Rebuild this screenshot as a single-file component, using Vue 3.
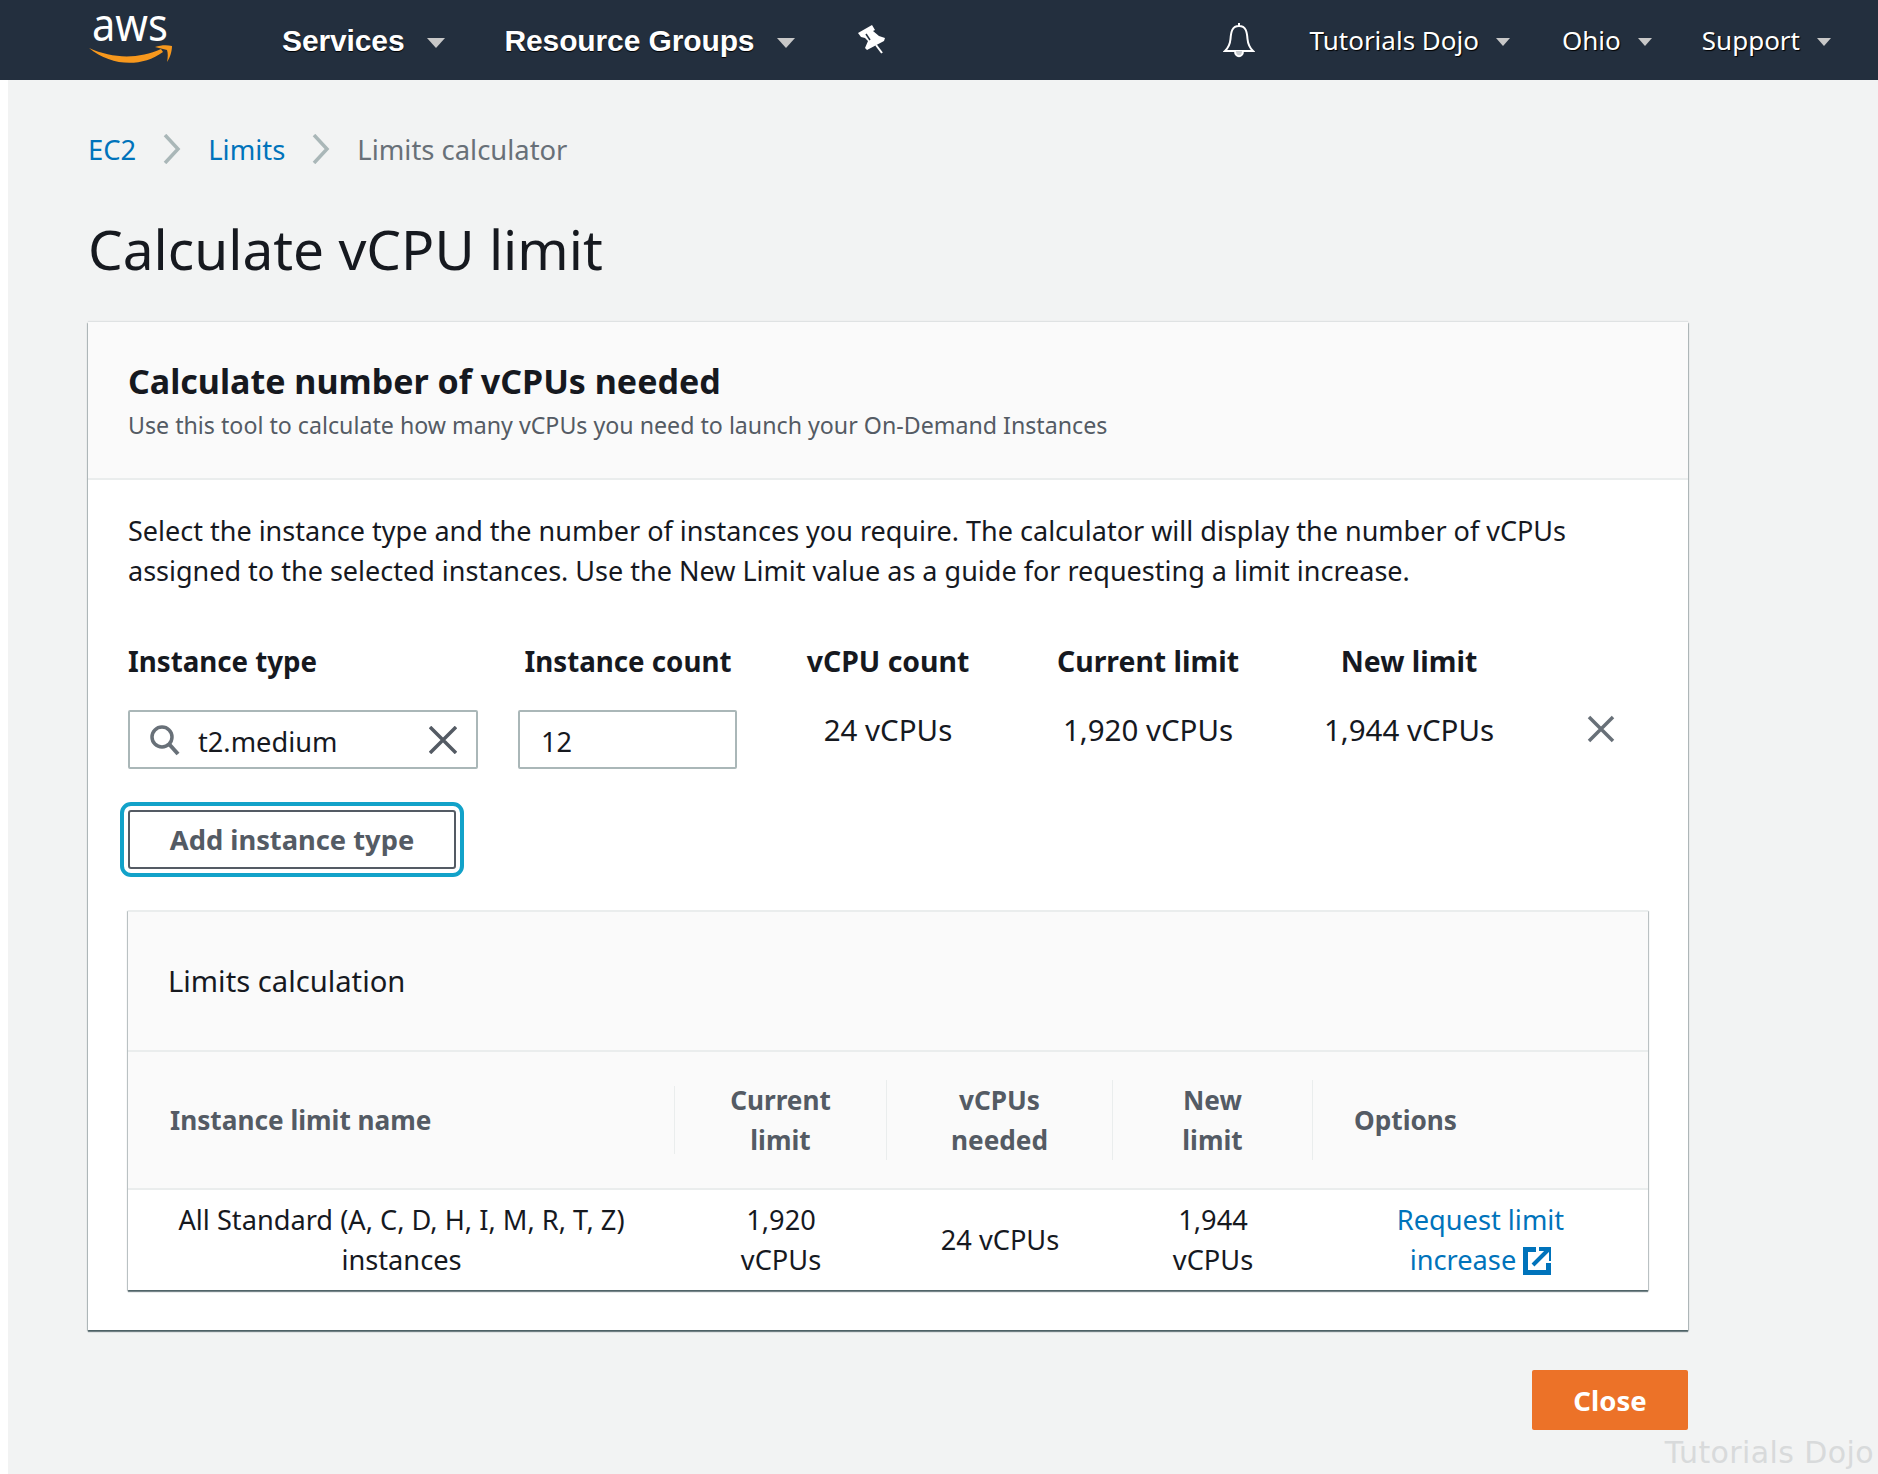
<script setup>
const cols = [
  { label: 'vCPU count', value: '24 vCPUs' },
  { label: 'Current limit', value: '1,920 vCPUs' },
  { label: 'New limit', value: '1,944 vCPUs' }
]
const headers = [
  { text: 'Instance limit name', cls: 'left' },
  { text: 'Current limit', cls: '' },
  { text: 'vCPUs needed', cls: '' },
  { text: 'New limit', cls: '' },
  { text: 'Options', cls: 'left' }
]
</script>

<template>
  <div class="page">
    <header class="topbar">
      <svg class="logo" width="84" height="56" viewBox="0 0 84 56">
        <text x="3" y="29" class="logotext" textLength="76" lengthAdjust="spacingAndGlyphs">aws</text>
        <path d="M0 36 C 24 47, 50 47, 72 37 L74 40 C 52 56, 22 54, 0 36 Z" fill="#f7981d"/>
        <path d="M66 35 C 72 33 78 33 83 34 C 83 39 81 46 78 50 C 79 45 79 41 78 38 C 74 37 70 36 66 35 Z" fill="#f7981d"/>
      </svg>
      <div class="nav nav-bold first-bold">Services<i class="caret big"></i></div>
      <div class="nav nav-bold">Resource Groups<i class="caret big"></i></div>
      <svg class="pin" width="30" height="30" viewBox="16 11 30 30">
        <path d="M17 19 L31 11 L34 16 L32 17 L38 22 L44 24 L43 27 L26 36 L24 34 L27 27 L24 24 L20 23 Z" fill="#fff"/>
        <path d="M35 31 L41 39" stroke="#fff" stroke-width="2"/>
        <path d="M25 20 L29 26" stroke="#232f3e" stroke-width="1.500"/>
      </svg>
      <div class="spacer"></div>
      <svg class="bell" width="32" height="36" viewBox="0 0 32 36">
        <path d="M16 1 V4 M16 4 C9 4 8 10 7.500 17 C7 23 5 26 2 29 L30 29 C27 26 25 23 24.500 17 C24 10 23 4 16 4 Z" fill="none" stroke="#fff" stroke-width="2"/>
        <path d="M12 29 C12 36 20 36 20 29" fill="#c8ccd0" stroke="#fff" stroke-width="2"/>
      </svg>
      <div class="nav nav-light first">Tutorials Dojo<i class="caret"></i></div>
      <div class="nav nav-light">Ohio<i class="caret"></i></div>
      <div class="nav nav-light last">Support<i class="caret"></i></div>
    </header>

    <main class="content">
      <nav class="crumbs">
        <a>EC2</a>
        <svg width="18" height="30" viewBox="0 0 18 30"><path d="M2 1 L15 15 L2 29" fill="none" stroke="#aab7b8" stroke-width="3.500"/></svg>
        <a>Limits</a>
        <svg width="18" height="30" viewBox="0 0 18 30"><path d="M2 1 L15 15 L2 29" fill="none" stroke="#aab7b8" stroke-width="3.500"/></svg>
        <span>Limits calculator</span>
      </nav>
      <h1>Calculate vCPU limit</h1>

      <section class="card">
        <div class="card-head">
          <h2>Calculate number of vCPUs needed</h2>
          <p>Use this tool to calculate how many vCPUs you need to launch your On-Demand Instances</p>
        </div>
        <div class="card-body">
          <p class="intro">Select the instance type and the number of instances you require. The calculator will display the number of vCPUs assigned to the selected instances. Use the New Limit value as a guide for requesting a limit increase.</p>

          <div class="form-grid">
            <label class="lab">Instance type</label>
            <label class="lab ctr">Instance count</label>
            <label v-for="c in cols" :key="c.label" class="lab ctr wide">{{ c.label }}</label>
            <span></span>

            <div class="box search">
              <svg width="32" height="32" viewBox="0 0 32 32"><circle cx="13" cy="13" r="10" fill="none" stroke="#687078" stroke-width="3.500"/><path d="M20 20 L29 30" stroke="#687078" stroke-width="4"/></svg>
              <span class="grow">t2.medium</span>
              <svg width="28" height="28" viewBox="0 0 28 28"><path d="M1 1 L27 27 M27 1 L1 27" stroke="#545b64" stroke-width="3.500"/></svg>
            </div>
            <div class="box count"><span>12</span></div>
            <div v-for="c in cols" :key="c.value" class="val">{{ c.value }}</div>
            <svg class="rowx" width="30" height="30" viewBox="0 0 30 30"><path d="M3 3 L27 27 M27 3 L3 27" stroke="#687078" stroke-width="3.500"/></svg>
          </div>

          <button class="add">Add instance type</button>

          <div class="limits">
            <div class="limits-title">Limits calculation</div>
            <table>
              <colgroup>
                <col class="c1" /><col class="c2" /><col class="c3" /><col class="c4" /><col />
              </colgroup>
              <thead>
                <tr>
                  <th v-for="h in headers" :key="h.text" :class="h.cls"><div class="th-in">{{ h.text }}</div></th>
                </tr>
              </thead>
              <tbody>
                <tr>
                  <td>All Standard (A, C, D, H, I, M, R, T, Z)<br />instances</td>
                  <td>1,920<br />vCPUs</td>
                  <td>24 vCPUs</td>
                  <td>1,944<br />vCPUs</td>
                  <td class="link">Request limit<br />increase
                    <svg class="ext" width="28" height="28" viewBox="0 0 28 28"><path d="M13 2.500 H2.500 V25.500 H25.500 V16" fill="none" stroke="#0073bb" stroke-width="5"/><path d="M10 18 L25 3 M16 2 H28 V14" fill="none" stroke="#0073bb" stroke-width="4"/></svg>
                  </td>
                </tr>
              </tbody>
            </table>
          </div>
        </div>
      </section>

      <div class="actions"><button class="close">Close</button></div>
    </main>
    <div class="mark">Tutorials Dojo</div>
  </div>
</template>

<style>
html, body { margin: 0; background: #f2f3f3; }
</style>

<style scoped>
.page {
  position: relative;
  width: 1878px;
  height: 1474px;
  overflow: hidden;
  background: #f2f3f3;
  font-family: "Noto Sans", "Open Sans", sans-serif;
  color: #16191f;
}
.topbar {
  height: 80px;
  background: #232f3e;
  display: flex;
  align-items: center;
  padding-left: 89px;
  padding-right: 47px;
  box-sizing: border-box;
}
.logo { margin-right: 109px; flex: none; }
.logotext { font-family: "Noto Sans", sans-serif; font-size: 46px; fill: #fff; }
.nav { color: #fff; display: flex; align-items: center; white-space: nowrap; }
.nav-bold {
  font-family: "Liberation Sans", sans-serif;
  font-size: 30px;
  font-weight: 700;
  letter-spacing: -0.12px;
  margin-right: 58px;
  margin-top: 2px;
  text-shadow: 0 1px 1px #000;
}
.first-bold { margin-right: 59px; }
.nav-light {
  font-size: 26px;
  margin-left: 52px;
  text-shadow: 1px 1px 1px #000;
}
.nav-light.first { margin-left: 55px; }
.nav-light.last { margin-left: 50px; }
.caret {
  display: inline-block;
  width: 0;
  height: 0;
  border-left: 7px solid transparent;
  border-right: 7px solid transparent;
  border-top: 8px solid #c8c8c8;
  margin-left: 17px;
  margin-top: 3px;
}
.caret.big {
  border-left-width: 9px;
  border-right-width: 9px;
  border-top-width: 10px;
  margin-left: 23px;
}
.pin { margin-left: 4px; flex: none; }
.spacer { flex: 1; }
.bell { flex: none; }

.content { padding: 49px 190px 0 88px; position: relative; }
.content::before {
  content: "";
  position: absolute;
  left: 0;
  top: 0;
  width: 8px;
  height: 1394px;
  background: #fff;
}
.crumbs {
  display: flex;
  align-items: center;
  height: 40px;
  gap: 27px;
  font-size: 27.400px;
  color: #687078;
}
.crumbs a { color: #0073bb; }
h1 {
  margin: 44px 0 0;
  font-size: 55px;
  line-height: 72px;
  font-weight: 400;
  color: #16191f;
}
.card {
  margin-top: 37px;
  background: #fff;
  height: 1008px;
  box-shadow: 0 2px 1px 0 rgba(0, 28, 36, 0.5), 1px 1px 1px 0 rgba(0, 28, 36, 0.2), -1px 1px 1px 0 rgba(0, 28, 36, 0.2), 0 -1px 1px 0 rgba(0, 28, 36, 0.08);
}
.card-head {
  height: 158px;
  box-sizing: border-box;
  background: #fafafa;
  border-bottom: 2px solid #eaeded;
  padding: 37px 40px 0;
}
h2 { margin: 0; font-size: 34px; line-height: 44px; font-weight: 700; }
.card-head p { margin: 5px 0 0; font-size: 23.200px; line-height: 34px; color: #545b64; }
.card-body { padding: 31px 40px 0; }
.intro { margin: 0; font-size: 27px; line-height: 40px; width: 1500px; }
.form-grid {
  display: grid;
  grid-template-columns: 350px 259px 302px 218px 304px 60px;
  grid-template-rows: 69px 59px;
  margin-top: 50px;
}
.form-grid > :nth-child(2) { margin-left: 41px; }
.lab { font-size: 27.700px; font-weight: 700; line-height: 40px; }
.lab.ctr { text-align: center; }
.lab.wide { font-size: 28.400px; }
.box {
  box-sizing: border-box;
  height: 59px;
  border: 2px solid #aab7b8;
  border-radius: 2px;
  background: #fff;
  display: flex;
  align-items: center;
  font-size: 27.200px;
}
.search { width: 350px; padding: 0 19px; gap: 17px; }
.grow { flex: 1; padding-top: 4px; }
.count { padding-left: 21px; width: 219px; margin-left: 40px; }
.count span { padding-top: 4px; }
.val { font-size: 29.500px; text-align: center; line-height: 40px; }
.rowx { margin: 4px 0 0 25px; }
.add {
  display: block;
  margin-top: 41px;
  box-sizing: border-box;
  width: 328px;
  height: 59px;
  background: #fff;
  border: 2px solid #545b64;
  border-radius: 3px;
  outline: 4px solid #12a2c9;
  outline-offset: 4px;
  font-family: inherit;
  font-size: 27.300px;
  font-weight: 700;
  color: #545b64;
}
.limits {
  margin-top: 41px;
  width: 1520px;
  background: #fff;
  box-shadow: 0 2px 1px 0 rgba(0, 28, 36, 0.5), 1px 1px 1px 0 rgba(0, 28, 36, 0.2), -1px 1px 1px 0 rgba(0, 28, 36, 0.2);
}
.limits-title {
  height: 142px;
  box-sizing: border-box;
  background: #fafafa;
  border-top: 2px solid #eaeded;
  border-bottom: 2px solid #eaeded;
  padding-left: 40px;
  display: flex;
  align-items: center;
  font-size: 29.200px;
}
table { width: 100%; border-collapse: separate; border-spacing: 0; table-layout: fixed; }
.c1 { width: 547px; }
.c2 { width: 212px; }
.c3 { width: 226px; }
.c4 { width: 200px; }
th {
  background: #fafafa;
  height: 138px;
  padding: 0;
  border-bottom: 2px solid #eaeded;
  box-sizing: border-box;
  font-size: 26.200px;
  line-height: 40px;
  font-weight: 700;
  color: #545b64;
}
.th-in {
  min-height: 68px;
  padding: 0 41px;
  display: flex;
  align-items: center;
  justify-content: center;
  text-align: center;
  border-right: 1px solid #eaeded;
}
th:first-child .th-in { padding-left: 42px; }
th:last-child .th-in { border-right: 0; }
th.left .th-in { justify-content: flex-start; }
td {
  height: 100px;
  padding: 0;
  text-align: center;
  font-size: 27.200px;
  line-height: 40px;
}
.link { color: #0073bb; }
.ext { vertical-align: -5px; }
.actions { display: flex; justify-content: flex-end; margin-top: 40px; }
.close {
  width: 156px;
  height: 60px;
  border: 0;
  border-radius: 2px;
  background: #ec7228;
  color: #fff;
  font-family: inherit;
  font-size: 27.500px;
  font-weight: 700;
}
.mark {
  position: absolute;
  right: 4px;
  bottom: 4px;
  font-family: "DejaVu Sans", sans-serif;
  font-size: 30px;
  color: #d8dadb;
  letter-spacing: 0.4px;
}
</style>
